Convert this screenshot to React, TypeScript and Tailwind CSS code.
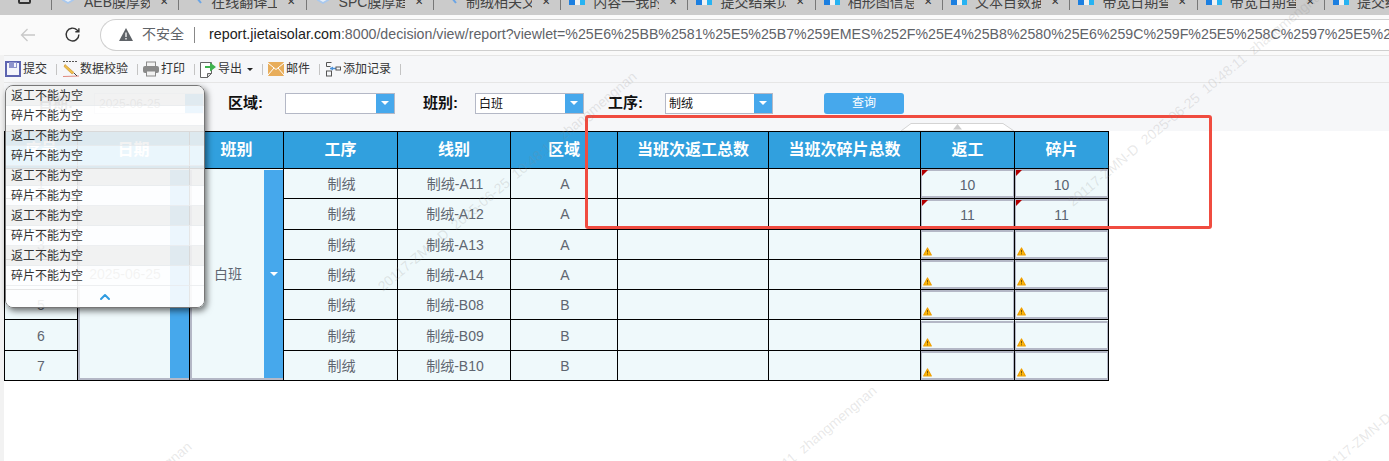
import { ChevronUp } from "lucide-react";

const font = "font-['Liberation_Sans','Noto_Sans_CJK_SC',sans-serif]";

const tabs = [
  { label: "AEB膜厚数据看板", icon: "cube" },
  { label: "在线翻译工具", icon: "search" },
  { label: "SPC膜厚趋势图", icon: "cube" },
  { label: "制绒相关文件夹", icon: "search" },
  { label: "内容一我的报表", icon: "doc" },
  { label: "提交结果页面", icon: "doc" },
  { label: "相形图信息表", icon: "doc" },
  { label: "文本目数据表", icon: "doc" },
  { label: "带宽日期查询", icon: "doc" },
  { label: "带宽日期查询", icon: "doc" },
  { label: "提交结果页面", icon: "doc" },
];

const rows = [
  { no: "1", line: "制绒-A11", area: "A", rework: "10", broken: "10" },
  { no: "2", line: "制绒-A12", area: "A", rework: "11", broken: "11" },
  { no: "3", line: "制绒-A13", area: "A" },
  { no: "4", line: "制绒-A14", area: "A" },
  { no: "5", line: "制绒-B08", area: "B" },
  { no: "6", line: "制绒-B09", area: "B" },
  { no: "7", line: "制绒-B10", area: "B" },
];

const heads = ["序号", "日期", "班别", "工序", "线别", "区域", "当班次返工总数", "当班次碎片总数", "返工", "碎片"];

const markText = "20117-ZMN-D  2025-06-25  10:48:11  zhangmengnan";
const marks = [
  { left: 380, top: 278 },
  { left: 1070, top: 193 },
  { left: -65, top: 648 },
  { left: 620, top: 592 },
  { left: 1322, top: 462 },
];

function TabIcon({ kind }: { kind: string }) {
  if (kind === "cube") {
    return (
      <svg width="16" height="16" viewBox="0 0 16 16">
        <path d="M8 1l6 3.500v7L8 15l-6-3.500v-7z" fill="#a8c8ee" />
        <path d="M8 6l3.500 2v3L8 13l-3.500-2V8z" fill="#e6eef8" />
      </svg>
    );
  }
  if (kind === "search") {
    return (
      <svg width="16" height="16" viewBox="0 0 16 16" fill="none" stroke="#6aa5e6" strokeWidth="2">
        <circle cx="7" cy="6" r="4" />
        <path d="M10 9l4 5" />
      </svg>
    );
  }
  return (
    <svg width="16" height="16" viewBox="0 0 16 16">
      <path d="M0 0h8v16H0z" fill="#1c7fe0" />
      <path d="M8 0h8v16h-5V9H8z" fill="#27b3f2" />
      <path d="M6 9h5v7H6z" fill="#f2f2f2" />
    </svg>
  );
}

function Sep() {
  return <span className="ml-[9px] mr-[5px] h-[11px] w-px bg-[#c4c4c4]" />;
}

function ToolItem({ icon, label, caret }: { icon: React.ReactNode; label: string; caret?: boolean }) {
  return (
    <div className="flex items-center gap-[2px] text-[12px] text-[#333]">
      {icon}
      <span>{label}</span>
      {caret && <span className="ml-[3px] h-0 w-0 border-x-[3px] border-t-[3px] border-x-transparent border-t-[#222]" />}
    </div>
  );
}

function SelectBox({ value, width }: { value?: string; width: string }) {
  return (
    <div className={`flex h-[21px] items-stretch border border-[#b4b8c6] bg-white ${width}`}>
      <span className="flex-1 pl-[3px] text-[12px] font-normal leading-[20px] text-[#111]">{value}</span>
      <span className="flex w-[18px] items-center justify-center bg-[#46a8ec]">
        <span className="h-0 w-0 border-x-[4px] border-t-[4px] border-x-transparent border-t-white" />
      </span>
    </div>
  );
}

function Warn() {
  return (
    <svg className="absolute bottom-[1px] left-[1px]" width="9" height="9" viewBox="0 0 9 9">
      <path d="M4.500 1 8.300 8H.7z" fill="#fbb80f" stroke="#f0a000" strokeWidth="1.200" strokeLinejoin="round" />
      <path d="M4.500 3v2.500M4.500 6.300v1" stroke="#6b4a00" strokeWidth=".9" />
    </svg>
  );
}

function InputCell({ value }: { value?: string }) {
  return (
    <td className="border border-black p-0">
      <div className="relative flex h-[29px] items-center justify-center border-x border-y-2 border-[#b4b8c6] bg-[#eff9fb] text-[14px] text-[#5a6472]">
        {value ? (
          <span className="absolute left-0 -top-px h-0 w-0 border-r-[6px] border-t-[6px] border-r-transparent border-t-[#b30000]" />
        ) : (
          <Warn />
        )}
        <span className="pt-[3px]">{value}</span>
      </div>
    </td>
  );
}

const errors = Array.from({ length: 5 }).flatMap(() => ["返工不能为空", "碎片不能为空"]);

export default function App() {
  return (
    <div className={`relative h-[461px] w-[1389px] overflow-hidden bg-white ${font}`}>
      {/* browser chrome */}
      <div className="flex h-[15px] overflow-hidden bg-[#cbcbcb]">
        <div className="w-[51px] shrink-0 pl-[18px]">
          <div className="-mt-[5px] h-[9px] w-[13px] rounded-[2px] border-2 border-[#333]" />
        </div>
        {tabs.map((t, i) => (
          <div key={i} className="flex h-[10px] w-[127.300px] shrink-0 items-start border-l border-[#777] pl-[8px]">
            <div className="-mt-[11px] shrink-0">
              <TabIcon kind={t.icon} />
            </div>
            <span className="-mt-[7px] ml-[8px] w-[66px] shrink-0 overflow-hidden whitespace-nowrap text-[14px] leading-[18px] text-[#444]">
              {t.label}
            </span>
            <span className="-mt-[5px] ml-[10px] text-[10px] leading-[14px] text-[#333]">✕</span>
          </div>
        ))}
      </div>
      <div className="flex h-[40px] items-center bg-[#fafafa] pb-[1px] pl-[20px]">
        <svg className="shrink-0" width="16" height="16" viewBox="0 0 16 16" fill="none" stroke="#c8c8c8" strokeWidth="1.300">
          <path d="M15 8H1.500M7.500 2 1.500 8l6 6" />
        </svg>
        <svg className="ml-[28px] shrink-0" width="17" height="17" viewBox="0 0 24 24" fill="none" stroke="#333" strokeWidth="2">
          <path d="M21 12a9 9 0 1 1-2.600-6.300L21 8M21 3v5h-5" />
        </svg>
        <div className="ml-[19px] flex h-[32px] min-w-0 flex-1 items-center overflow-hidden rounded-l-full border border-r-0 border-[#cfcfcf] bg-white pl-[18px] text-[14.300px]">
          <svg className="shrink-0" width="14" height="13" viewBox="0 0 14 13">
            <path d="M7 0l7 13H0z" fill="#5f6368" />
            <path d="M7 4.500v4.500M7 10v1.500" stroke="#fff" strokeWidth="1.300" />
          </svg>
          <span className="ml-[9px] shrink-0 text-[14px] text-[#5f6368]">不安全</span>
          <span className="ml-[10px] mr-[14px] h-[16px] w-px shrink-0 bg-[#888]" />
          <span className="shrink-0 whitespace-nowrap text-[#222]">report.jietaisolar.com</span>
          <span className="shrink-0 whitespace-nowrap text-[14.200px] text-[#5f6368]">:8000/decision/view/report?viewlet=%25E6%25BB%2581%25E5%25B7%259EMES%252F%25E4%25B8%2580%25E6%259C%259F%25E5%258C%2597%25E5%258C%25BA%25E7%2594%259F</span>
        </div>
      </div>

      {/* report toolbar */}
      <div className="flex h-[28px] items-center border-y border-[#e6e6e6] bg-[#f6f7f9] pl-[5px]">
        <ToolItem
          label="提交"
          icon={
            <svg width="16" height="16" viewBox="0 0 16 16">
              <rect x="1" y="1" width="14" height="14" fill="#f4f5fb" stroke="#5d64b0" strokeWidth="2" />
              <rect x="4" y="1" width="8" height="6" fill="#8e94cc" />
              <rect x="9" y="2" width="2" height="4" fill="#f4f5fb" />
            </svg>
          }
        />
        <Sep />
        <ToolItem
          label="数据校验"
          icon={
            <svg className="-mr-[2px]" width="18" height="18" viewBox="0 0 18 18">
              <path d="M1 1.500h15" stroke="#555" strokeWidth="1" strokeDasharray="2 1" />
              <path d="M3 4.500l9 8-2 1.500L2 6.500z" fill="#eec04a" stroke="#c98a2a" strokeWidth=".6" />
              <path d="M1 16.500l16-.5" stroke="#e08a80" strokeWidth="1" />
              <path d="M12 13l3 3" stroke="#444" strokeWidth="1" />
            </svg>
          }
        />
        <Sep />
        <ToolItem
          label="打印"
          icon={
            <svg width="16" height="16" viewBox="0 0 16 16">
              <rect x="3.500" y="1" width="9" height="5" fill="#f2f2f2" stroke="#8a8a8a" />
              <rect x="0" y="5" width="16" height="7" rx="2" fill="#8a8a8a" />
              <rect x="3.500" y="10" width="9" height="5" fill="#f2f2f2" stroke="#8a8a8a" />
            </svg>
          }
        />
        <Sep />
        <ToolItem
          label="导出"
          caret
          icon={
            <svg width="16" height="17" viewBox="0 0 16 17">
              <path d="M.5 1.500h11v11l-4 4h-7z" fill="#fff" stroke="#666" />
              <path d="M7.500 12.500v4l4-4z" fill="#ddd" stroke="#666" />
              <path d="M5 5h5V1.500L16 6l-6 4.500V7H5z" fill="#3fb34f" />
            </svg>
          }
        />
        <Sep />
        <ToolItem
          label="邮件"
          icon={
            <svg width="16" height="14" viewBox="0 0 16 14">
              <rect width="16" height="14" rx="1" fill="#e8ad5a" />
              <path d="M0 1l8 6.500L16 1M0 13l6-7M16 13l-6-7" stroke="#fff" strokeWidth="1" fill="none" />
            </svg>
          }
        />
        <Sep />
        <ToolItem
          label="添加记录"
          icon={
            <svg width="16" height="16" viewBox="0 0 16 16" fill="none" stroke="#555" strokeWidth="1">
              <path d="M1.500 1.500h5M1.500 1.500v4h4" />
              <rect x="1.500" y="10" width="5" height="5" />
              <path d="M5 7.500h6" stroke="#4a90d9" strokeWidth="1.500" />
              <path d="M8 5.500 5 7.500l3 2z" fill="#4a90d9" stroke="none" />
              <rect x="11" y="6" width="4.500" height="3" />
            </svg>
          }
        />
        <Sep />
      </div>

      {/* filter row */}
      <div className="flex h-[48px] items-center bg-[#f6f7f9] pb-[8px] text-[15px] font-bold text-[#111]">
        <span className="ml-[38px] w-[56px] text-[#555]">日期:</span>
        <div className="flex h-[21px] w-[110px] items-stretch border border-[#d8dbe4] bg-white">
          <span className="flex-1 pl-1 text-[12px] font-normal leading-[20px] text-[#888]">2025-06-25</span>
          <span className="w-[18px] bg-[#46a8ec]" />
        </div>
        <span className="ml-[24px] w-[57px]">区域:</span>
        <SelectBox width="w-[110px]" />
        <span className="ml-[28px] w-[52px]">班别:</span>
        <SelectBox value="白班" width="w-[109px]" />
        <span className="ml-[24px] w-[57px]">工序:</span>
        <SelectBox value="制绒" width="w-[108px]" />
        <button className="ml-[51px] h-[21px] w-[80px] rounded-[3px] bg-[#46a8ec] text-[12px] font-normal text-white">查询</button>
      </div>

      {/* table */}
      <div className="pl-[4px]">
        <table className="w-[1105px] table-fixed border-collapse text-center text-[14px] text-[#5f6670]">
          <colgroup>
            <col className="w-[73px]" />
            <col className="w-[112px]" />
            <col className="w-[94px]" />
            <col className="w-[114px]" />
            <col className="w-[113px]" />
            <col className="w-[107px]" />
            <col className="w-[151px]" />
            <col className="w-[152px]" />
            <col className="w-[94px]" />
            <col className="w-[94px]" />
          </colgroup>
          <thead>
            <tr className="h-[37px] bg-[#31a0de] text-[16px] font-bold text-white">
              {heads.map((h) => (
                <th key={h} className="border border-black">
                  {h}
                </th>
              ))}
            </tr>
          </thead>
          <tbody className="bg-[#eff9fb]">
            {rows.map((r, i) => (
              <tr key={r.no} className="h-[30.300px]">
                <td className="border border-black pt-[2px]">{r.no}</td>
                {i === 0 && (
                  <>
                    <td rowSpan={7} className="border border-black p-0">
                      <div className="flex h-[210px] border-b-2 border-l-2 border-[#b4b8c6]">
                        <span className="flex-1 self-center pt-[2px] text-[#888]">2025-06-25</span>
                        <span className="w-[19px] bg-[#46a8ec]" />
                      </div>
                    </td>
                    <td rowSpan={7} className="border border-black p-0">
                      <div className="flex h-[210px] border-b-2 border-l-2 border-[#b4b8c6]">
                        <span className="flex-1 self-center pt-[2px]">白班</span>
                        <span className="flex w-[19px] items-center justify-center bg-[#46a8ec]">
                          <span className="h-0 w-0 border-x-[4px] border-t-[4px] border-x-transparent border-t-white" />
                        </span>
                      </div>
                    </td>
                  </>
                )}
                <td className="border border-black pl-[2px] pt-[2px]">制绒</td>
                <td className="border border-black pl-[2px] pt-[2px]">{r.line}</td>
                <td className="border border-black pl-[2px] pt-[2px]">{r.area}</td>
                <td className="border border-black" />
                <td className="border border-black" />
                <InputCell value={r.rework} />
                <InputCell value={r.broken} />
              </tr>
            ))}
          </tbody>
        </table>
      </div>

      {/* collapse tab above the header */}
      <svg className="absolute left-[901px] top-[123px]" width="113" height="8" viewBox="0 0 113 8">
        <path d="M0 8 10 .5h92L113 8z" fill="#fff" stroke="#d4d4d4" />
        <path d="M52 6.500 56.500 1 61 6.500z" fill="#ccc" />
      </svg>

      {/* left edge strip */}
      <div className="absolute left-0 top-[55px] h-[406px] w-[4px] bg-[#f2f2f2]" />

      {/* error popup */}
      <div className="absolute left-[5px] top-[85px] w-[200px] overflow-hidden rounded-[8px] border border-[#777] shadow-[2px_3px_6px_rgba(0,0,0,0.55)]">
        {errors.map((e, i) => (
          <div
            key={i}
            className={`h-[20px] border-b border-[#e9ebee]/80 pl-[5px] text-[12px] leading-[21px] text-[#333] ${
              i % 2 === 0 ? "bg-[#f1f1f1]/90" : "bg-white/90"
            }`}
          >
            {e}
          </div>
        ))}
        <div className="flex h-[21px] items-center justify-center bg-white/90">
          <ChevronUp className="h-[16px] w-[16px] text-[#2f9be0]" strokeWidth={3} />
        </div>
      </div>

      {/* annotation box */}
      <div className="pointer-events-none absolute left-[585px] top-[115px] h-[114px] w-[627px] rounded-[3px] border-[3px] border-[#f04c40]" />

      {/* watermark */}
      {marks.map((m) => (
        <span
          key={m.left}
          className="pointer-events-none absolute origin-left -rotate-[40deg] whitespace-pre text-[14px] text-[#8a8a8a]/20"
          style={{ left: m.left, top: m.top }}
        >
          {markText}
        </span>
      ))}
    </div>
  );
}
